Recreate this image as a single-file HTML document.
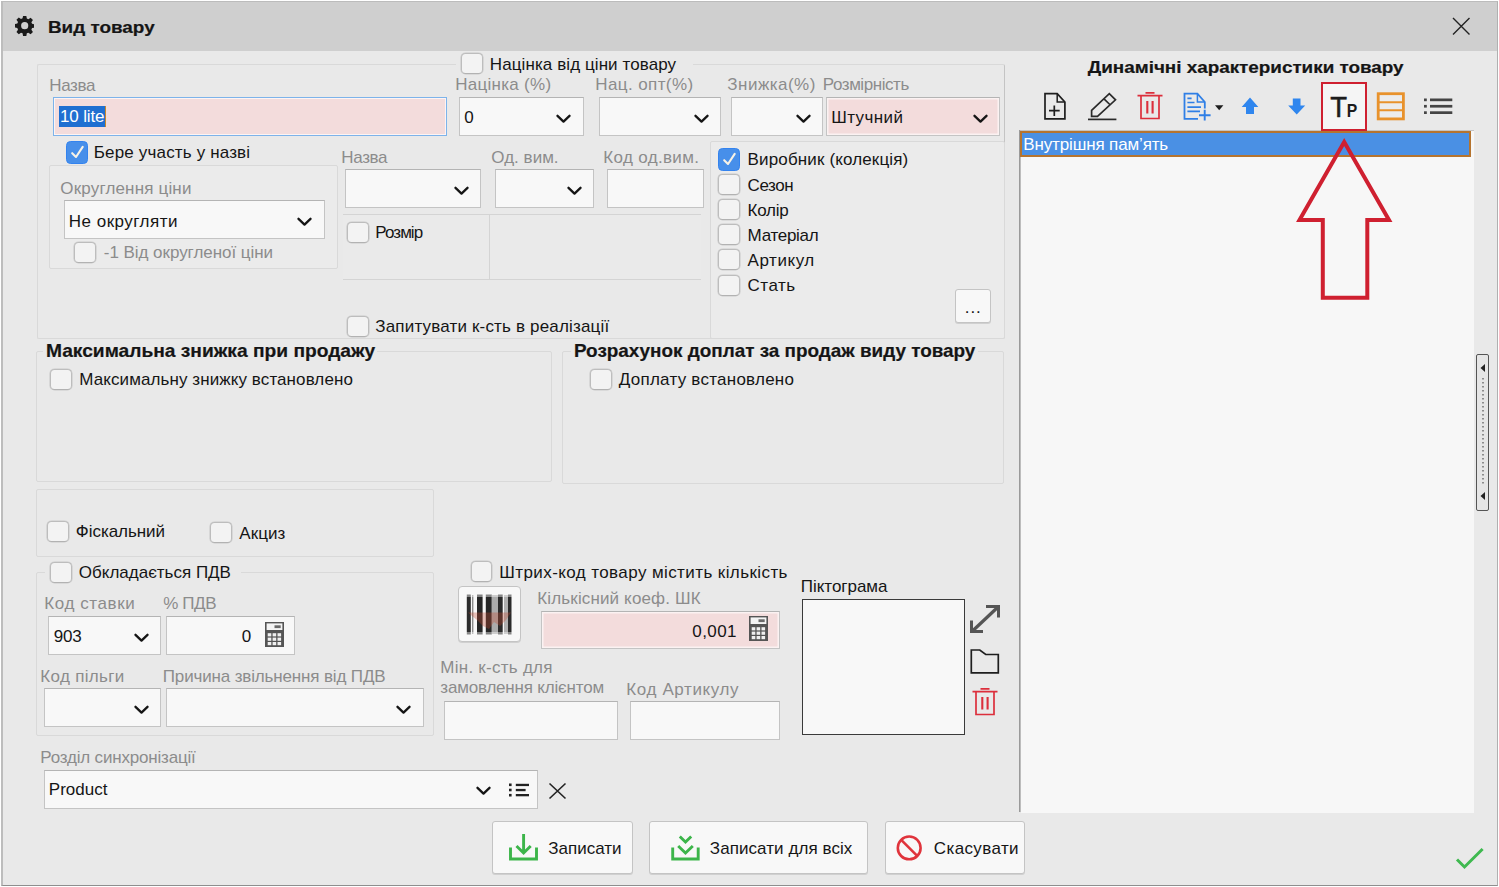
<!DOCTYPE html>
<html lang="uk"><head><meta charset="utf-8"><title>Вид товару</title>
<style>
*{box-sizing:border-box;margin:0;padding:0}
html,body{width:1499px;height:887px;overflow:hidden;background:#fff}
body{position:relative;font-family:"Liberation Sans",sans-serif;font-size:17px;color:#151515}
.a{position:absolute}
.t{position:absolute;white-space:nowrap;line-height:20px;height:20px}
.g{color:#8c8c8c}
.b{font-weight:bold;font-size:17.5px;letter-spacing:0;color:#151515;-webkit-text-stroke:.2px #151515}
.box{position:absolute;border:1px solid #d9d9d9;border-radius:2px}
.in{position:absolute;background:#f8f8f8;border:1px solid #c4c4c4;border-top-color:#b4b4b4}
.pink{background:#f3dcdc;box-shadow:inset 0 0 0 1.500px #fbf2f2}
.sel{position:absolute;left:5px;top:8px;height:21px;line-height:22px;padding:0 1px;letter-spacing:-.15px;background:#1f6fd1;color:#fff;border-right:1px solid #c98a2a}
.cb{position:absolute;width:21.500px;height:21px;border:1px solid #bdbdbd;border-bottom-color:#b2b2b2;border-radius:4.500px;background:#f3f3f3;box-shadow:0 0 0 .6px rgba(185,185,185,.6)}
.cb.on{width:22px;height:22.500px;background:#478fea;border-color:#3383ef;box-shadow:none}
.cb.on svg{position:absolute;left:-1px;top:-1px}
.btn{position:absolute;background:#f8f8f8;border:1px solid #c4c4c4;border-radius:3px;box-shadow:0 1px 0 #d0d0d0}
.leg{background:#e9e9e9;padding:0 2px}
</style></head><body>
<div class="a" style="left:1px;top:1px;width:1497px;height:885px;background:#e9e9e9;border:1px solid #b0b0b0;border-left:2px solid #bdbdbd;border-top-color:#bcbcbc;border-bottom-color:#8e8e8e"></div>
<div class="a" style="left:3px;top:2px;width:1494px;height:48.500px;background:#cfcfcf"></div>
<svg class="a" style="left:14.800px;top:16.300px" width="19.400" height="19.400" viewBox="0 0 20 20"><path fill="#1a1a1a" d="M8.300 0h3.400l.5 2.700 1.600.7 2.300-1.600 2.400 2.400-1.600 2.300.7 1.600 2.700.5v3.400l-2.700.5-.7 1.600 1.600 2.300-2.400 2.400-2.300-1.600-1.600.7-.5 2.700H8.300l-.5-2.700-1.600-.7-2.300 1.600-2.400-2.400 1.600-2.300-.7-1.600L-.3 11.700V8.300l2.700-.5.7-1.600L1.500 3.900l2.400-2.400 2.300 1.600 1.600-.7zM10 6.300a3.700 3.700 0 100 7.400 3.700 3.700 0 000-7.400z"/></svg>
<!--TITLE-->
<svg class="a" style="left:1451px;top:16px" width="20" height="20" viewBox="0 0 20 20"><path d="M2 2 18.500 18.500M18.500 2 2 18.500" stroke="#222" stroke-width="1.400" fill="none"/></svg>
<div id="t1" class="t b" style="left:47.5px;top:18px;letter-spacing:0;transform-origin:1px 50%;transform:scaleX(1.1121);font-size:17px;">Вид товару</div>
<!-- group1 -->
<div class="box" style="left:37px;top:64px;width:968px;height:275px;border-right-color:#c4c4c4"></div>
<div class="a" style="left:456px;top:62px;width:237px;height:5px;background:#e9e9e9"></div>
<div class="cb" style="left:461px;top:53px"></div>
<div id="t2" class="t " style="left:489.8px;top:55px;letter-spacing:0.09px;">Націнка від ціни товару</div>
<div id="t3" class="t g" style="left:49.3px;top:76px;letter-spacing:-0.36px;">Назва</div>
<div class="in pink" style="left:53px;top:97px;width:394px;height:39px;border-color:#7db3ea;box-shadow:inset 0 0 0 1px #fdf4f4"><span class="sel">10 lite</span></div>
<div class="cb on" style="left:66px;top:141px"><svg width="22" height="22" viewBox="0 0 22 22"><path d="M6.200 12.200 10 16 16.700 5.900" stroke="#f7f2e6" stroke-width="2.100" fill="none" stroke-linecap="round" stroke-linejoin="round"/></svg></div>
<div id="t4" class="t " style="left:93.8px;top:143px;letter-spacing:0.16px;">Бере участь у назві</div>
<div class="box" style="left:49px;top:165px;width:289px;height:104px;background:#ebebeb"></div>
<div id="t5" class="t g" style="left:60.3px;top:179px;letter-spacing:0.17px;">Округлення ціни</div>
<div class="in " style="left:64px;top:200px;width:261px;height:39px;"></div>
<div id="t6" class="t " style="left:68.8px;top:212px;letter-spacing:0.48px;">Не округляти</div>
<svg class="a" style="left:297px;top:217px" width="15" height="10" viewBox="0 0 15 10"><path d="M1.5 1.8 7.5 7.6 13.500 1.800" stroke="#151515" stroke-width="2.300" fill="none" stroke-linecap="round" stroke-linejoin="round"/></svg>
<div class="cb" style="left:74px;top:242px"></div>
<div id="t7" class="t g" style="left:103.8px;top:243px;letter-spacing:-0.04px;">-1 Від округленої ціни</div>
<div id="t8" class="t g" style="left:455.3px;top:75px;letter-spacing:0.27px;">Націнка (%)</div>
<div class="in " style="left:459px;top:97px;width:125px;height:39px;"></div>
<div id="t9" class="t " style="left:464.3px;top:108px;">0</div>
<svg class="a" style="left:556px;top:114px" width="15" height="10" viewBox="0 0 15 10"><path d="M1.5 1.8 7.5 7.6 13.500 1.800" stroke="#151515" stroke-width="2.300" fill="none" stroke-linecap="round" stroke-linejoin="round"/></svg>
<div id="t10" class="t g" style="left:595.3px;top:75px;letter-spacing:0.40px;">Нац. опт(%)</div>
<div class="in " style="left:599px;top:97px;width:122px;height:39px;"></div>
<svg class="a" style="left:694px;top:114px" width="15" height="10" viewBox="0 0 15 10"><path d="M1.5 1.8 7.5 7.6 13.500 1.800" stroke="#151515" stroke-width="2.300" fill="none" stroke-linecap="round" stroke-linejoin="round"/></svg>
<div id="t11" class="t g" style="left:727.3px;top:75px;letter-spacing:0.48px;">Знижка(%)</div>
<div class="in " style="left:731px;top:97px;width:92px;height:39px;"></div>
<svg class="a" style="left:796px;top:114px" width="15" height="10" viewBox="0 0 15 10"><path d="M1.5 1.8 7.5 7.6 13.500 1.800" stroke="#151515" stroke-width="2.300" fill="none" stroke-linecap="round" stroke-linejoin="round"/></svg>
<div id="t12" class="t g" style="left:822.8px;top:75px;letter-spacing:-0.44px;">Розмірність</div>
<div class="in pink" style="left:826px;top:97px;width:174px;height:39px;"></div>
<div id="t13" class="t " style="left:831.3px;top:108px;letter-spacing:0.38px;">Штучний</div>
<svg class="a" style="left:973px;top:114px" width="15" height="10" viewBox="0 0 15 10"><path d="M1.5 1.8 7.5 7.6 13.500 1.800" stroke="#151515" stroke-width="2.300" fill="none" stroke-linecap="round" stroke-linejoin="round"/></svg>
<div id="t14" class="t g" style="left:341.3px;top:148px;letter-spacing:-0.34px;">Назва</div>
<div class="in " style="left:345px;top:169px;width:136px;height:39px;"></div>
<svg class="a" style="left:454px;top:186px" width="15" height="10" viewBox="0 0 15 10"><path d="M1.5 1.8 7.5 7.6 13.500 1.800" stroke="#151515" stroke-width="2.300" fill="none" stroke-linecap="round" stroke-linejoin="round"/></svg>
<div id="t15" class="t g" style="left:491.3px;top:148px;letter-spacing:0.02px;">Од. вим.</div>
<div class="in " style="left:495px;top:169px;width:99px;height:39px;"></div>
<svg class="a" style="left:567px;top:186px" width="15" height="10" viewBox="0 0 15 10"><path d="M1.5 1.8 7.5 7.6 13.500 1.800" stroke="#151515" stroke-width="2.300" fill="none" stroke-linecap="round" stroke-linejoin="round"/></svg>
<div id="t16" class="t g" style="left:603.3px;top:148px;letter-spacing:0.33px;">Код од.вим.</div>
<div class="in " style="left:607px;top:169px;width:97px;height:39px;"></div>
<div class="a" style="left:343px;top:215px;width:358px;height:64px;background:#eaeaea"></div>
<div class="a" style="left:343px;top:214px;width:358px;height:1px;background:#d4d4d4"></div>
<div class="a" style="left:343px;top:279px;width:358px;height:1px;background:#d4d4d4"></div>
<div class="a" style="left:489px;top:214px;width:1px;height:66px;background:#d4d4d4"></div>
<div class="cb" style="left:347px;top:222px"></div>
<div id="t17" class="t " style="left:375.3px;top:223px;letter-spacing:-0.94px;">Розмір</div>
<div class="cb" style="left:347px;top:316px"></div>
<div id="t18" class="t " style="left:375.3px;top:317px;letter-spacing:0.17px;">Запитувати к-сть в реалізації</div>
<div class="box" style="left:710px;top:141px;width:295px;height:198px;background:#ebebeb"></div>
<div class="cb on" style="left:718px;top:148px"><svg width="22" height="22" viewBox="0 0 22 22"><path d="M6.200 12.200 10 16 16.700 5.900" stroke="#f7f2e6" stroke-width="2.100" fill="none" stroke-linecap="round" stroke-linejoin="round"/></svg></div>
<div id="t19" class="t " style="left:747.6px;top:150px;letter-spacing:0.14px;">Виробник (колекція)</div>
<div class="cb" style="left:718px;top:174px"></div>
<div id="t20" class="t " style="left:747.6px;top:176px;letter-spacing:-0.45px;">Сезон</div>
<div class="cb" style="left:718px;top:199px"></div>
<div id="t21" class="t " style="left:747.6px;top:201px;letter-spacing:-0.26px;">Колір</div>
<div class="cb" style="left:718px;top:224px"></div>
<div id="t22" class="t " style="left:747.6px;top:226px;letter-spacing:-0.30px;">Матеріал</div>
<div class="cb" style="left:718px;top:249px"></div>
<div id="t23" class="t " style="left:747.6px;top:251px;letter-spacing:0.55px;">Артикул</div>
<div class="cb" style="left:718px;top:274.5px"></div>
<div id="t24" class="t " style="left:747.6px;top:276px;letter-spacing:0.47px;">Стать</div>
<div class="btn" style="left:955px;top:289px;width:36px;height:34px"></div>
<div id="t25" class="t " style="left:964.8px;top:298px;letter-spacing:0.91px;">...</div>
<!-- group2-3 -->
<div class="box" style="left:36px;top:351px;width:516px;height:131px;"></div>
<div class="a" style="left:43px;top:349px;width:334px;height:5px;background:#e9e9e9"></div>
<div id="t26" class="t b" style="left:45.5px;top:341px;letter-spacing:0;transform-origin:1px 50%;transform:scaleX(1.0370);font-size:18.500px;">Максимальна знижка при продажу</div>
<div class="cb" style="left:50px;top:369px"></div>
<div id="t27" class="t " style="left:79.3px;top:370px;letter-spacing:0.09px;">Максимальну знижку встановлено</div>
<div class="box" style="left:562px;top:351px;width:442px;height:133px;"></div>
<div class="a" style="left:571px;top:349px;width:407px;height:5px;background:#e9e9e9"></div>
<div id="t28" class="t b" style="left:574.0px;top:341px;letter-spacing:0;transform-origin:1px 50%;transform:scaleX(1.0211);font-size:18.500px;">Розрахунок доплат за продаж виду товару</div>
<div class="cb" style="left:590px;top:369px"></div>
<div id="t29" class="t " style="left:618.8px;top:370px;letter-spacing:0.25px;">Доплату встановлено</div>
<!-- group4-5 -->
<div class="box" style="left:36px;top:489px;width:398px;height:68px;"></div>
<div class="cb" style="left:47px;top:521px"></div>
<div id="t30" class="t " style="left:75.8px;top:522px;letter-spacing:-0.04px;">Фіскальний</div>
<div class="cb" style="left:210px;top:522px"></div>
<div id="t31" class="t " style="left:239.3px;top:524px;letter-spacing:0.07px;">Акциз</div>
<div class="box" style="left:36px;top:572px;width:398px;height:164px;"></div>
<div class="a" style="left:45px;top:570px;width:196px;height:5px;background:#e9e9e9"></div>
<div class="cb" style="left:50px;top:562px"></div>
<div id="t32" class="t " style="left:78.8px;top:563px;letter-spacing:-0.00px;">Обкладається ПДВ</div>
<div id="t33" class="t g" style="left:44.3px;top:594px;letter-spacing:0.59px;">Код ставки</div>
<div class="in " style="left:48px;top:616px;width:113px;height:39px;"></div>
<div id="t34" class="t " style="left:53.8px;top:627px;letter-spacing:-0.19px;">903</div>
<svg class="a" style="left:134px;top:633px" width="15" height="10" viewBox="0 0 15 10"><path d="M1.5 1.8 7.5 7.6 13.500 1.800" stroke="#151515" stroke-width="2.300" fill="none" stroke-linecap="round" stroke-linejoin="round"/></svg>
<div id="t35" class="t g" style="left:163.3px;top:594px;letter-spacing:-0.41px;">% ПДВ</div>
<div class="in " style="left:166px;top:616px;width:129px;height:39px;"></div>
<div id="t36" class="t " style="left:241.8px;top:627px;">0</div>
<svg class="a" style="left:264.5px;top:622px" width="19" height="25" viewBox="0 0 19 25"><rect x="0" y="0" width="19" height="25" fill="#555"/><rect x="1.600" y="1.400" width="15.800" height="6.600" fill="#f4f4f4"/><rect x="9.500" y="3.300" width="6.200" height="2.800" fill="#6a6a6a"/><g fill="#f0f0f0"><rect x="2.7" y="11.2" width="3.600" height="3.200"/><rect x="2.7" y="15.6" width="3.600" height="3.200"/><rect x="2.7" y="20.0" width="3.600" height="3.200"/><rect x="7.6" y="11.2" width="3.600" height="3.200"/><rect x="7.6" y="15.6" width="3.600" height="3.200"/><rect x="7.6" y="20.0" width="3.600" height="3.200"/><rect x="12.5" y="11.2" width="3.600" height="3.200"/><rect x="12.5" y="15.6" width="3.600" height="3.200"/><rect x="12.5" y="20.0" width="3.600" height="3.200"/></g></svg>
<div id="t37" class="t g" style="left:40.3px;top:667px;letter-spacing:0.32px;">Код пільги</div>
<div class="in " style="left:44px;top:688px;width:117px;height:39px;"></div>
<svg class="a" style="left:134px;top:705px" width="15" height="10" viewBox="0 0 15 10"><path d="M1.5 1.8 7.5 7.6 13.500 1.800" stroke="#151515" stroke-width="2.300" fill="none" stroke-linecap="round" stroke-linejoin="round"/></svg>
<div id="t38" class="t g" style="left:162.8px;top:667px;letter-spacing:-0.15px;">Причина звільнення від ПДВ</div>
<div class="in " style="left:166px;top:688px;width:258px;height:39px;"></div>
<svg class="a" style="left:396px;top:705px" width="15" height="10" viewBox="0 0 15 10"><path d="M1.5 1.8 7.5 7.6 13.500 1.800" stroke="#151515" stroke-width="2.300" fill="none" stroke-linecap="round" stroke-linejoin="round"/></svg>
<div id="t39" class="t g" style="left:40.3px;top:748px;letter-spacing:-0.19px;">Розділ синхронізації</div>
<div class="in " style="left:44px;top:770px;width:494px;height:39px;"></div>
<div id="t40" class="t " style="left:48.8px;top:780px;letter-spacing:0.03px;">Product</div>
<svg class="a" style="left:476px;top:786px" width="15" height="10" viewBox="0 0 15 10"><path d="M1.5 1.8 7.5 7.6 13.500 1.800" stroke="#151515" stroke-width="2.300" fill="none" stroke-linecap="round" stroke-linejoin="round"/></svg>
<svg class="a" style="left:509px;top:782px" width="21" height="16" viewBox="0 0 21 16"><g fill="#222"><rect x="0" y="1.500" width="2.600" height="2.600"/><rect x="0" y="6.700" width="2.600" height="2.600"/><rect x="0" y="11.900" width="2.600" height="2.600"/><rect x="6.800" y="1.800" width="13.200" height="2.300"/><rect x="6.800" y="6.900" width="9.800" height="2.300"/><rect x="6.800" y="12" width="13.200" height="2.300"/></g></svg>
<svg class="a" style="left:548px;top:782px" width="19" height="18" viewBox="0 0 19 18"><path d="M1.500 1.500 17.500 16.500M17.500 1.500 1.500 16.500" stroke="#222" stroke-width="1.600" fill="none"/></svg>
<!-- mid -->
<div class="cb" style="left:470.5px;top:561px"></div>
<div id="t41" class="t " style="left:499.3px;top:563px;letter-spacing:0.41px;">Штрих-код товару містить кількість</div>
<div class="btn" style="left:458px;top:586px;width:63px;height:56px;border-radius:4px"></div>
<svg class="a" style="left:464px;top:594px" width="50" height="41" viewBox="464 594 50 41"><rect x="466.8" y="594.5" width="4" height="40" fill="#2b2b2b"/><rect x="472" y="595" width="1.400" height="39" fill="#8a8a8a"/><rect x="477" y="594.500" width="5.600" height="40" fill="#262626"/><rect x="485.800" y="594.500" width="6" height="40" fill="#262626"/><rect x="491.800" y="595" width="6.200" height="39" fill="#ababab"/><rect x="498" y="594.500" width="4.700" height="40" fill="#2b2b2b"/><rect x="504" y="595" width="4" height="39" fill="#b0b0b0"/><rect x="508" y="594.500" width="3.500" height="40" fill="#2b2b2b"/><path d="M468 612.500H511L506 620 500 626 494 622 489 629 483 626 477 620 472 616Z" fill="#c24a30" opacity=".33"/><rect x="464" y="594" width="50" height="3" fill="#f8f8f8" opacity=".45"/><rect x="464" y="632" width="50" height="3" fill="#f8f8f8" opacity=".45"/></svg>
<div id="t42" class="t g" style="left:537.3px;top:588.5px;letter-spacing:0.14px;">Кількісний коеф. ШК</div>
<div class="in pink" style="left:541px;top:611px;width:239px;height:38px;"></div>
<div id="t43" class="t " style="left:692.3px;top:621.5px;letter-spacing:0.41px;">0,001</div>
<svg class="a" style="left:749.3px;top:616px" width="19" height="25" viewBox="0 0 19 25"><rect x="0" y="0" width="19" height="25" fill="#555"/><rect x="1.600" y="1.400" width="15.800" height="6.600" fill="#f4f4f4"/><rect x="9.500" y="3.300" width="6.200" height="2.800" fill="#6a6a6a"/><g fill="#f0f0f0"><rect x="2.7" y="11.2" width="3.600" height="3.200"/><rect x="2.7" y="15.6" width="3.600" height="3.200"/><rect x="2.7" y="20.0" width="3.600" height="3.200"/><rect x="7.6" y="11.2" width="3.600" height="3.200"/><rect x="7.6" y="15.6" width="3.600" height="3.200"/><rect x="7.6" y="20.0" width="3.600" height="3.200"/><rect x="12.5" y="11.2" width="3.600" height="3.200"/><rect x="12.5" y="15.6" width="3.600" height="3.200"/><rect x="12.5" y="20.0" width="3.600" height="3.200"/></g></svg>
<div id="t44" class="t g" style="left:440.3px;top:657.5px;letter-spacing:0.26px;">Мін. к-сть для</div>
<div id="t45" class="t g" style="left:440.3px;top:677.5px;letter-spacing:-0.19px;">замовлення клієнтом</div>
<div class="in " style="left:444px;top:701px;width:174px;height:39px;"></div>
<div id="t46" class="t g" style="left:626.3px;top:679.5px;letter-spacing:0.62px;">Код Артикулу</div>
<div class="in " style="left:630px;top:701px;width:150px;height:39px;"></div>
<div id="t47" class="t " style="left:800.8px;top:577px;letter-spacing:-0.03px;">Піктограма</div>
<div class="a" style="left:802px;top:599px;width:163px;height:136px;background:#f8f8f8;border:1px solid #3a3a3a"></div>
<svg class="a" style="left:969px;top:604px" width="32" height="30" viewBox="969 604 32 30"><path d="M972.500 631 998 607" stroke="#555" stroke-width="3.200" fill="none"/><path d="M986 606.500H998.500V617.500M971.500 620.500V631.500H983" stroke="#555" stroke-width="3" fill="none"/></svg>
<svg class="a" style="left:969px;top:648px" width="32" height="27" viewBox="969 648 32 27"><path d="M971.300 672.800V650H979.800L985.700 654.500H998.300V672.800Z" stroke="#1e1e1e" stroke-width="1.700" fill="none" stroke-linejoin="miter"/></svg>
<svg class="a" style="left:971.7px;top:687px" width="26" height="29" viewBox="0 0 26 29"><path d="M8.500 1.800H17.500M0.500 4.700H25.500M4 4.700V27.500H22V4.700" stroke="#dc2f3c" stroke-width="1.700" fill="none"/><path d="M10.300 10V22.500M15.600 10V22.500" stroke="#dc2f3c" stroke-width="2.100" fill="none"/></svg>
<!-- bottom -->
<div class="btn" style="left:492px;top:820.500px;width:141px;height:53.500px"></div>
<div class="btn" style="left:649px;top:820.500px;width:219px;height:53.500px"></div>
<div class="btn" style="left:885px;top:820.500px;width:140px;height:53.500px"></div>
<svg class="a" style="left:507px;top:832px" width="33" height="31" viewBox="507 832 33 31"><path d="M510.500 847.500V859H536.500V847.500" stroke="#3cb54a" stroke-width="2.900" fill="none"/><path d="M523.600 834V852M516.500 846 523.600 853 530.700 846" stroke="#3cb54a" stroke-width="2.900" fill="none"/></svg>
<div id="t48" class="t " style="left:548.3px;top:839px;letter-spacing:-0.01px;">Записати</div>
<svg class="a" style="left:668px;top:832px" width="34" height="31" viewBox="668 832 34 31"><path d="M672.700 847.500V859H698.200V847.500" stroke="#3cb54a" stroke-width="2.900" fill="none"/><path d="M679.800 836.500 685.500 842 691.200 836.500M678.200 846 685.500 853 692.800 846" stroke="#3cb54a" stroke-width="2.900" fill="none"/></svg>
<div id="t49" class="t " style="left:709.8px;top:839px;letter-spacing:0.07px;">Записати для всіх</div>
<svg class="a" style="left:894px;top:833px" width="30" height="30" viewBox="894 833 30 30"><circle cx="909.200" cy="847.900" r="11.400" stroke="#e0343c" stroke-width="2.600" fill="none"/><path d="M901.200 839.900 917.200 855.900" stroke="#e0343c" stroke-width="2.600"/></svg>
<div id="t50" class="t " style="left:933.8px;top:839px;letter-spacing:0.38px;">Скасувати</div>
<svg class="a" style="left:1454px;top:845px" width="32" height="25" viewBox="0 0 32 25"><path d="M3 14.500 10.500 22 28.600 4" stroke="#3fb950" stroke-width="3" fill="none"/></svg>
<!-- right -->
<div id="t51" class="t b" style="left:1087.5px;top:57.5px;letter-spacing:0;transform-origin:1px 50%;transform:scaleX(1.1781);font-size:16px;">Динамічні характеристики товару</div>
<div class="a" style="left:1021px;top:130px;width:453px;height:683px;background:#f7f7f7;border-top:1px solid #c4c4c4"></div>
<div class="a" style="left:1019px;top:130px;width:1px;height:682px;background:#9a9a9a"></div><div class="a" style="left:1020px;top:130px;width:1px;height:682px;background:#bdbdbd"></div>
<div class="a" style="left:1020px;top:131px;width:451px;height:25.500px;background:#4a90e4;border:2px solid #b5742f"></div>
<div id="t52" class="t " style="left:1023.3px;top:135px;letter-spacing:-0.14px;color:#fff">Внутрішня пам’ять</div>
<svg class="a" style="left:1043px;top:91px" width="25" height="30" viewBox="1043 91 25 30"><path d="M1045 93.700H1057.200L1064.900 102V118.800H1045Z" stroke="#1e1e1e" stroke-width="1.700" fill="none"/><path d="M1057.200 93.700V102H1064.900" stroke="#1e1e1e" stroke-width="1.500" fill="none"/><path d="M1054.300 105.500V116M1049 110.700H1059.700" stroke="#1e1e1e" stroke-width="1.700"/></svg>
<svg class="a" style="left:1086px;top:91px" width="33" height="30" viewBox="1086 91 33 30"><path d="M1088 119.400H1116.400" stroke="#2a2a2a" stroke-width="1.700"/><path d="M1091.600 116.300V110.300L1109.300 93.600 1115.500 99.800 1097.500 116.300Z M1104 98.800 1110.300 105" stroke="#2a2a2a" stroke-width="1.700" fill="none" stroke-linejoin="miter"/></svg>
<svg class="a" style="left:1136.5px;top:91px" width="26" height="29" viewBox="0 0 26 29"><path d="M8.500 1.800H17.500M0.500 4.700H25.500M4 4.700V27.500H22V4.700" stroke="#dc2f3c" stroke-width="1.700" fill="none"/><path d="M10.300 10V22.500M15.600 10V22.500" stroke="#dc2f3c" stroke-width="2.100" fill="none"/></svg>
<svg class="a" style="left:1182px;top:91px" width="31" height="31" viewBox="1182 91 31 31"><path d="M1198 118.800H1184.500V93.700H1197.400L1204.800 102V108.500" stroke="#2f7fe6" stroke-width="1.800" fill="none"/><path d="M1197.400 93.700V102H1204.800" stroke="#2f7fe6" stroke-width="1.500" fill="none"/><path d="M1187.400 98.400H1191.600M1187.400 102.500H1194.500M1187.400 107.200H1201M1187.400 111.400H1200" stroke="#2f7fe6" stroke-width="1.700"/><path d="M1204.700 109.800V120.600M1199 115.200H1210.600" stroke="#2f7fe6" stroke-width="1.900"/></svg>
<svg class="a" style="left:1214px;top:104px" width="11" height="7" viewBox="0 0 11 7"><path d="M1 1.200H9.400L5.200 6.200Z" fill="#1e1e1e"/></svg>
<svg class="a" style="left:1241px;top:97px" width="18" height="18" viewBox="1241 97 18 18"><path d="M1250 97.500 1258.300 107H1254V114H1246V107H1241.700Z" fill="#2f86ee"/></svg>
<svg class="a" style="left:1288px;top:97px" width="18" height="18" viewBox="1288 97 18 18"><path d="M1296.700 114.500 1305.200 105.500H1300.500V98.500H1292.800V105.500H1288.200Z" fill="#2f86ee"/></svg>
<div class="a" style="left:1321px;top:82px;width:46px;height:49px;background:#f5f5f5;border:2px solid #cf2030"></div>
<svg class="a" style="left:1328px;top:90px" width="32" height="30" viewBox="1328 90 32 30"><text x="1330.300" y="117" font-family="Liberation Sans, sans-serif" font-size="29.500" fill="#1c1c1c" stroke="#1c1c1c" stroke-width="0.550" textLength="16.800" lengthAdjust="spacingAndGlyphs">T</text><text x="1346.800" y="117" font-family="Liberation Sans, sans-serif" font-size="19" font-weight="bold" fill="#1c1c1c" textLength="10.500" lengthAdjust="spacingAndGlyphs">P</text></svg>
<svg class="a" style="left:1376px;top:91px" width="30" height="30" viewBox="1376 91 30 30"><rect x="1378.200" y="93.700" width="25.200" height="25.200" stroke="#e8922c" stroke-width="2.800" fill="#ececec"/><path d="M1378 102.300H1404M1378 110.300H1404" stroke="#e8922c" stroke-width="2"/></svg>
<svg class="a" style="left:1423px;top:97px" width="31" height="18" viewBox="1423 97 31 18"><g fill="#444"><rect x="1424" y="98.500" width="2.800" height="2.700"/><rect x="1424" y="104.900" width="2.800" height="2.700"/><rect x="1424" y="111.300" width="2.800" height="2.700"/><rect x="1430" y="98.500" width="22.300" height="2.700"/><rect x="1430" y="104.900" width="22.300" height="2.700"/><rect x="1430" y="111.300" width="22.300" height="2.700"/></g></svg>
<svg class="a" style="left:1290px;top:132px" width="110" height="175" viewBox="1290 132 110 175"><path d="M1344.200 142 1389 220H1367.300V297.800H1322.800V220H1299.500Z" stroke="#cf2030" stroke-width="4" fill="none" stroke-linejoin="miter"/></svg>
<div class="a" style="left:1476px;top:354px;width:13px;height:157px;background:#e6e6e6;border:1px solid #555;border-radius:2px"></div>
<svg class="a" style="left:1476px;top:354px" width="13" height="157" viewBox="0 0 13 157"><path d="M9 10V18L4.500 14ZM9 138V146L4.500 142Z" fill="#222"/><path d="M7 24V132" stroke="#333" stroke-width="1" stroke-dasharray="1.500 2.500"/></svg>
</body></html>
